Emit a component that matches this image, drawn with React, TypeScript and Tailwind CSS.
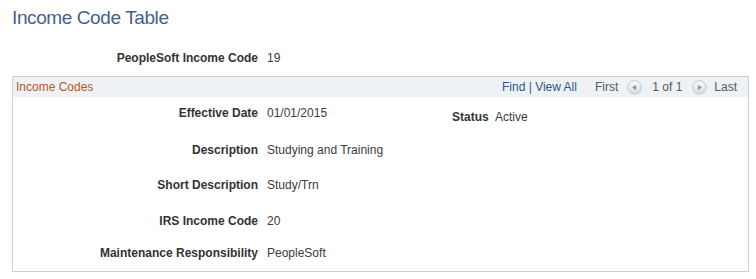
import type { ReactNode } from 'react';

// Botón circular de navegación (anterior / siguiente)
function NavButton({ dir }: { dir: 'prev' | 'next' }) {
  return (
    <svg width="15" height="15" viewBox="0 0 15 15" className="block">
      <defs>
        <linearGradient id={`g-${dir}`} x1="0" y1="0" x2="0" y2="1">
          <stop offset="0" stopColor="#fbfbfb" />
          <stop offset="1" stopColor="#d6d8da" />
        </linearGradient>
      </defs>
      <circle cx="7.5" cy="7.5" r="6.8" fill={`url(#g-${dir})`} stroke="#c4c7ca" strokeWidth="1" />
      {dir === 'prev' ? (
        <path d="M5.2 7.5 L9 4.9 L9 10.1 Z" fill="#8a8d90" />
      ) : (
        <path d="M9.8 7.5 L6 4.9 L6 10.1 Z" fill="#8a8d90" />
      )}
    </svg>
  );
}

function Field({ label, children, className = '' }: { label: string; children: ReactNode; className?: string }) {
  return (
    <div className={`flex h-[16px] items-center ${className}`}>
      <div className="w-[245px] text-right font-bold text-[#333333]">{label}</div>
      <div className="ml-[9px] text-[#3b3b3b]">{children}</div>
    </div>
  );
}

export default function App() {
  return (
    <div className="w-[756px] h-[279px] bg-white text-[12px] leading-[16px] font-['Liberation_Sans',Arial,sans-serif] overflow-hidden">
      {/* Título */}
      <h1 className="pt-[6px] pl-[12px] text-[19px] leading-[24px] tracking-[-0.4px] text-[#44628d]">Income Code Table</h1>

      {/* Código principal */}
      <div className="mt-[20px] flex h-[16px] items-center">
        <div className="w-[258px] text-right font-bold text-[#333333]">PeopleSoft Income Code</div>
        <div className="ml-[9px] text-[#3b3b3b]">19</div>
      </div>

      {/* Grupo de datos */}
      <div className="mt-[10px] ml-[12px] w-[737px] border border-[#cbced2] pb-[10px]">
        <div className="flex h-[20px] items-center bg-[#eef2f5] pl-[3px] pr-[11px]">
          <span className="text-[#b8581d]">Income Codes</span>
          <div className="ml-auto flex items-center text-[#555b61]">
            <span className="text-[#2d5486]">Find | View All</span>
            <span className="ml-[18px]">First</span>
            <span className="ml-[9px]"><NavButton dir="prev" /></span>
            <span className="ml-[10px]">1 of 1</span>
            <span className="ml-[10px]"><NavButton dir="next" /></span>
            <span className="ml-[7px]">Last</span>
          </div>
        </div>

        <div className="mt-[8px] flex items-start">
          <div className="w-[245px] text-right font-bold text-[#333333]">Effective Date</div>
          <div className="ml-[9px] w-[185px] text-[#3b3b3b]">01/01/2015</div>
          <div className="flex pt-[4px]">
            <div className="w-[35px] text-right font-bold text-[#333333]">Status</div>
            <div className="ml-[8px] text-[#3b3b3b]">Active</div>
          </div>
        </div>

        <Field label="Description" className="mt-[17px]">Studying and Training</Field>
        <Field label="Short Description" className="mt-[19px]">Study/Trn</Field>
        <Field label="IRS Income Code" className="mt-[20px]">20</Field>
        <Field label="Maintenance Responsibility" className="mt-[16px]">PeopleSoft</Field>
      </div>
    </div>
  );
}
